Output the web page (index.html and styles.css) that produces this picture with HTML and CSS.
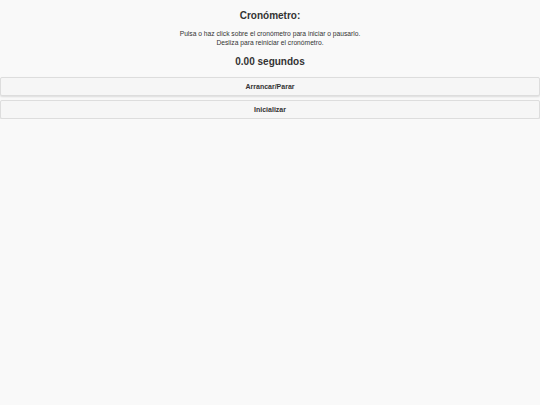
FILE: index.html
```html
<!DOCTYPE html>
<html>
<head>
<meta charset="utf-8">
<link rel="stylesheet" href="styles.css">
</head>
<body>
<div class="page">
  <h1 class="title">Cronómetro:</h1>
  <p class="info">Pulsa o haz click sobre el cronómetro para iniciar o pausarlo.<br>Desliza para reiniciar el cronómetro.</p>
  <div class="time">0.00 segundos</div>
  <div class="buttons">
    <button class="btn">Arrancar/Parar</button>
    <button class="btn">Inicializar</button>
  </div>
</div>
</body>
</html>
```
FILE: styles.css
```css
html, body {
  margin: 0;
  padding: 0;
  background: #f9f9f9;
  font-family: "Liberation Sans", Arial, sans-serif;
  color: #333;
}
.page {
  display: flex;
  flex-direction: column;
  align-items: stretch;
  padding-top: 9px;
}
.title {
  margin: 0;
  text-align: center;
  font-size: 10px;
  font-weight: bold;
  line-height: 14px;
}
.info {
  margin: 6px 0 0 0;
  text-align: center;
  font-size: 6.7px;
  line-height: 9px;
}
.time {
  margin-top: 8px;
  text-align: center;
  font-size: 10px;
  font-weight: bold;
  line-height: 14px;
}
.buttons {
  margin-top: 8px;
  display: flex;
  flex-direction: column;
  gap: 4px;
}
.btn {
  display: block;
  width: 100%;
  height: 19px;
  margin: 0;
  padding: 0;
  background: #f6f6f6;
  border: 1px solid #dddddd;
  border-radius: 2px;
  box-shadow: 0 1px 2px rgba(0,0,0,0.12);
  font-family: "Liberation Sans", Arial, sans-serif;
  font-size: 7px;
  font-weight: bold;
  color: #333;
  text-align: center;
}
```
